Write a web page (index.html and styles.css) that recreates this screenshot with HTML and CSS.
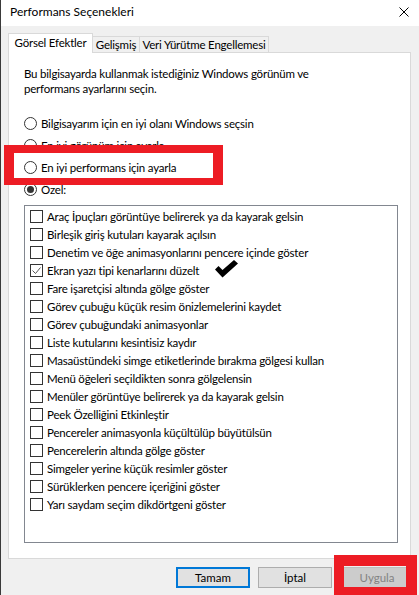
FILE: index.html
```html
<!DOCTYPE html>
<html lang="tr">
<head>
<meta charset="UTF-8" />
<meta name="viewport" content="width=device-width, initial-scale=1.0" />
<title>Performans Seçenekleri</title>
<link rel="stylesheet" href="styles.css">
</head>
<body>

<div class="window">
  <!-- Başlık çubuğu -->
  <div class="titlebar">
    <span class="title">Performans Seçenekleri</span>
    <svg class="close" width="10" height="10" viewBox="0 0 10 10">
      <path d="M0.5 0.5 L9.5 9.5 M9.5 0.5 L0.5 9.5" stroke="#000" stroke-width="1" fill="none"/>
    </svg>
  </div>

  <div class="content">
    <div class="tabs">
      <div class="tab active">Görsel Efektler</div>
      <div class="tab t2">Gelişmiş</div>
      <div class="tab t3">Veri Yürütme Engellemesi</div>
    </div>

    <div class="panel">
      <p class="intro">Bu bilgisayarda kullanmak istediğiniz Windows görünüm ve<br>performans ayarlarını seçin.</p>

      <div class="radios">
        <div class="radio"><span class="circle"></span>Bilgisayarım için en iyi olanı Windows seçsin</div>
        <div class="radio"><span class="circle"></span>En iyi görünüm için ayarla</div>
        <div class="radio"><span class="circle"></span>En iyi performans için ayarla</div>
        <div class="radio checked"><span class="circle"></span>Özel:</div>
      </div>

      <div class="listbox">
        <div class="item"><span class="box"></span>Araç İpuçları görüntüye belirerek ya da kayarak gelsin</div>
        <div class="item"><span class="box"></span>Birleşik giriş kutuları kayarak açılsın</div>
        <div class="item"><span class="box"></span>Denetim ve öğe animasyonlarını pencere içinde göster</div>
        <div class="item"><span class="box"><svg width="11" height="11" viewBox="0 0 11 11"><path d="M1.5 5.5 L4.5 8.5 L9.5 2.5" stroke="#555" stroke-width="1" fill="none"/></svg></span>Ekran yazı tipi kenarlarını düzelt</div>
        <div class="item"><span class="box"></span>Fare işaretçisi altında gölge göster</div>
        <div class="item"><span class="box"></span>Görev çubuğu küçük resim önizlemelerini kaydet</div>
        <div class="item"><span class="box"></span>Görev çubuğundaki animasyonlar</div>
        <div class="item"><span class="box"></span>Liste kutularını kesintisiz kaydır</div>
        <div class="item"><span class="box"></span>Masaüstündeki simge etiketlerinde bırakma gölgesi kullan</div>
        <div class="item"><span class="box"></span>Menü öğeleri seçildikten sonra gölgelensin</div>
        <div class="item"><span class="box"></span>Menüler görüntüye belirerek ya da kayarak gelsin</div>
        <div class="item"><span class="box"></span>Peek Özelliğini Etkinleştir</div>
        <div class="item"><span class="box"></span>Pencereler animasyonla küçültülüp büyütülsün</div>
        <div class="item"><span class="box"></span>Pencerelerin altında gölge göster</div>
        <div class="item"><span class="box"></span>Simgeler yerine küçük resimler göster</div>
        <div class="item"><span class="box"></span>Sürüklerken pencere içeriğini göster</div>
        <div class="item"><span class="box"></span>Yarı saydam seçim dikdörtgeni göster</div>
      </div>
    </div>
  </div>

  <div class="buttons">
    <button class="btn default">Tamam</button>
    <button class="btn">İptal</button>
    <button class="btn disabled">Uygula</button>
  </div>

  <!-- İşaretlemeler (ekran görüntüsü üzerine çizilmiş) -->
  <div class="redbox rb1"></div>
  <div class="redbox rb2"></div>
  <svg class="bigcheck" width="23" height="18" viewBox="0 0 23 18">
    <path d="M0 9.5 L3.5 6 L7.5 10 L19 0 L23 3.5 L7.5 17.5 Z" fill="#000"/>
  </svg>
</div>

</body>
</html>
```

FILE: styles.css
```css
body {
  margin: 0;
  padding: 0;
  font-family: Lato, "Liberation Sans", Arial, sans-serif;
  font-size: 11.5px;
  letter-spacing: -0.2px;
  color: #000;
}
.window {
  position: relative;
  width: 419px;
  height: 595px;
  background-color: #f0f0f0;
  overflow: hidden;
  box-sizing: border-box;
  border-left: 1px solid #3a3a3a;
}
/* Başlık */
.titlebar {
  height: 26px;
  background-color: #fff;
  display: flex;
  justify-content: space-between;
  align-items: flex-start;
  padding-left: 9px;
}
.title {
  padding-top: 4px;
  line-height: 16px;
  font-size: 12px;
  letter-spacing: 0;
}
.close {
  margin-top: 7px;
  margin-right: 10px;
}
.content {
  padding: 0 8px 0 7px;
}
/* Sekmeler */
.tabs {
  display: flex;
  align-items: flex-end;
  height: 19px;
  margin-top: 7px;
}
.tab {
  box-sizing: border-box;
  height: 16px;
  border: 1px solid #d9d9d9;
  border-bottom: none;
  background-color: #f0f0f0;
  line-height: 14px;
  padding-top: 1px;
  text-align: center;
  white-space: nowrap;
}
.tab.active {
  position: relative;
  z-index: 1;
  width: 85px;
  height: 20px;
  margin-bottom: -1px;
  padding-top: 2px;
  background-color: #fff;
}
.tab.t2 {
  width: 48px;
  margin-left: -1px;
}
.tab.t3 {
  width: 130px;
  margin-left: -1px;
}
/* Panel */
.panel {
  box-sizing: border-box;
  height: 507px;
  border: 1px solid #d9d9d9;
  background-color: #fff;
  padding: 13px 12px 0 15px;
}
.intro {
  margin: 0;
  line-height: 15px;
}
.radios {
  margin-top: 16px;
}
.radio {
  display: flex;
  align-items: center;
  height: 22px;
}
.circle {
  box-sizing: border-box;
  width: 13px;
  height: 13px;
  border: 1px solid #333;
  border-radius: 50%;
  background-color: #fff;
  margin-right: 4px;
  display: flex;
  align-items: center;
  justify-content: center;
}
.radio.checked .circle::after {
  content: "";
  width: 7px;
  height: 7px;
  border-radius: 50%;
  background-color: #333;
}
.listbox {
  box-sizing: border-box;
  width: 374px;
  height: 338px;
  margin-top: 5px;
  border: 1px solid #828790;
  padding: 1px 0 0 5px;
}
.item {
  display: flex;
  align-items: center;
  height: 18px;
}
.box {
  box-sizing: border-box;
  width: 13px;
  height: 13px;
  border: 1px solid #333;
  background-color: #fff;
  margin-right: 4px;
  flex-shrink: 0;
}
.box svg {
  display: block;
}
/* Düğmeler */
.buttons {
  display: flex;
  justify-content: flex-end;
  gap: 8px;
  padding: 8px 5px 0 0;
}
.btn {
  box-sizing: border-box;
  width: 74px;
  height: 21px;
  padding: 0;
  font-family: Lato, "Liberation Sans", Arial, sans-serif;
  font-size: 11.5px;
  color: #000;
  background-color: #e1e1e1;
  border: 1px solid #adadad;
}
.btn.default {
  border: 2px solid #0078d7;
}
.btn.disabled {
  background-color: #ccc;
  border-color: #bfbfbf;
  color: #838383;
}
/* Kırmızı çerçeveler */
.redbox {
  position: absolute;
  box-sizing: border-box;
  border-style: solid;
  border-color: #ed1c24;
}
.rb1 {
  left: 3px;
  top: 145px;
  width: 219px;
  height: 40px;
  border-width: 8px 10px 7px 10px;
}
.rb2 {
  left: 333px;
  top: 555px;
  width: 83px;
  height: 48px;
  border-width: 11px 11px 16px 10px;
}
.bigcheck {
  position: absolute;
  left: 214px;
  top: 260px;
}
```
